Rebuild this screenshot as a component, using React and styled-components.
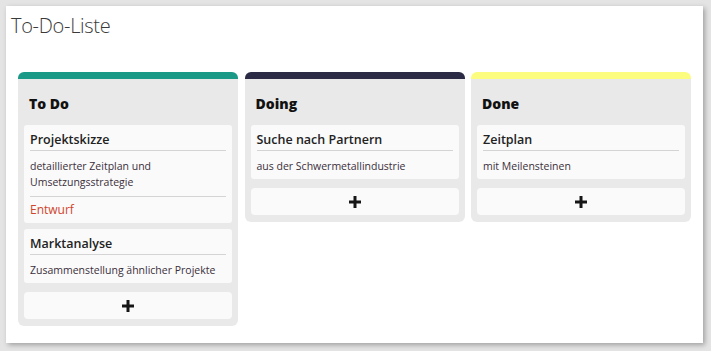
import React from "react";
import styled, { createGlobalStyle } from "styled-components";

const Global = createGlobalStyle`
  html, body { margin: 0; padding: 0; background: #ffffff; }
  body { font-family: "Open Sans", "Noto Sans", sans-serif; color: #222; }
`;

const Page = styled.div`
  width: 711px;
  height: 351px;
  padding: 6px 8px 8px 6px;
  box-sizing: border-box;
  background: #e4e4e4;
`;

const Panel = styled.div`
  width: 697px;
  height: 337px;
  background: #fff;
  box-shadow: 2px 2px 5px rgba(0, 0, 0, 0.3);
  box-sizing: border-box;
  padding: 8px 12px 0 12px;
`;

const Title = styled.h1`
  margin: 0 0 0 -7px;
  font-size: 20px;
  font-weight: 300;
  line-height: 24px;
  color: #3a3a3a;
  letter-spacing: -0.3px;
`;

const Board = styled.div`
  display: flex;
  align-items: flex-start;
  gap: 6.5px;
  margin-top: 34px;
`;

const Column = styled.section`
  width: 220px;
  box-sizing: border-box;
  background: #e9e9e9;
  border-top: 7px solid ${(p) => p.$accent};
  border-radius: 6px;
  padding: 0 6px 7px;
`;

const ColumnTitle = styled.h2`
  margin: 0;
  padding: 16px 5px 12px;
  font-size: 14px;
  line-height: 18px;
  font-weight: 800;
  color: #111;
`;

const Cards = styled.div`
  display: flex;
  flex-direction: column;
  gap: 6px;
`;

const Card = styled.div`
  background: #fafafa;
  border-radius: 3px;
  padding: 6px 6px 5px;
`;

const CardTitle = styled.div`
  font-size: 12.5px;
  line-height: 16px;
  font-weight: 600;
  color: #222;
  padding-top: 1px;
  padding-bottom: 2px;
  border-bottom: 1px solid #d4d4d4;
`;

const CardText = styled.div`
  line-height: 16px;
  color: ${(p) => (p.$tone === "draft" ? "#d0442c" : "#3a2f3a")};
  font-size: ${(p) => (p.$tone === "draft" ? "12px" : "10.5px")};
  padding-top: ${(p) => (p.$tone === "draft" ? "5px" : "7px")};
  padding-bottom: ${(p) => (p.$divided ? "6px" : "0")};
  border-bottom: ${(p) => (p.$divided ? "1px solid #d4d4d4" : "none")};
`;

const AddButton = styled.button`
  display: flex;
  align-items: center;
  justify-content: center;
  width: 100%;
  height: 27px;
  margin-top: 9px;
  border: none;
  border-radius: 4px;
  background: #fafafa;
  cursor: pointer;
  padding: 0;
`;

const PlusIcon = () => (
  <svg width="12" height="12" viewBox="0 0 12 12">
    <path d="M4.5 0h3v4.5H12v3H7.5V12h-3V7.5H0v-3h4.5z" fill="#161616" />
  </svg>
);

const columns = [
  {
    title: "To Do",
    accent: "#1a9986",
    cards: [
      {
        title: "Projektskizze",
        sections: [
          { text: "detaillierter Zeitplan und Umsetzungsstrategie" },
          { text: "Entwurf", tone: "draft" },
        ],
      },
      {
        title: "Marktanalyse",
        sections: [{ text: "Zusammenstellung ähnlicher Projekte" }],
      },
    ],
  },
  {
    title: "Doing",
    accent: "#2b2b45",
    cards: [
      {
        title: "Suche nach Partnern",
        sections: [{ text: "aus der Schwermetallindustrie" }],
      },
    ],
  },
  {
    title: "Done",
    accent: "#fcfc7e",
    cards: [
      {
        title: "Zeitplan",
        sections: [{ text: "mit Meilensteinen" }],
      },
    ],
  },
];

export default function App() {
  return (
    <>
      <Global />
      <Page>
        <Panel>
          <Title>To-Do-Liste</Title>
          <Board>
            {columns.map((col) => (
              <Column key={col.title} $accent={col.accent}>
                <ColumnTitle>{col.title}</ColumnTitle>
                <Cards>
                  {col.cards.map((card) => (
                    <Card key={card.title}>
                      <CardTitle>{card.title}</CardTitle>
                      {card.sections.map((s, i) => (
                        <CardText
                          key={i}
                          $tone={s.tone}
                          $divided={i < card.sections.length - 1}
                        >
                          {s.text}
                        </CardText>
                      ))}
                    </Card>
                  ))}
                </Cards>
                <AddButton aria-label="Karte hinzufügen">
                  <PlusIcon />
                </AddButton>
              </Column>
            ))}
          </Board>
        </Panel>
      </Page>
    </>
  );
}
